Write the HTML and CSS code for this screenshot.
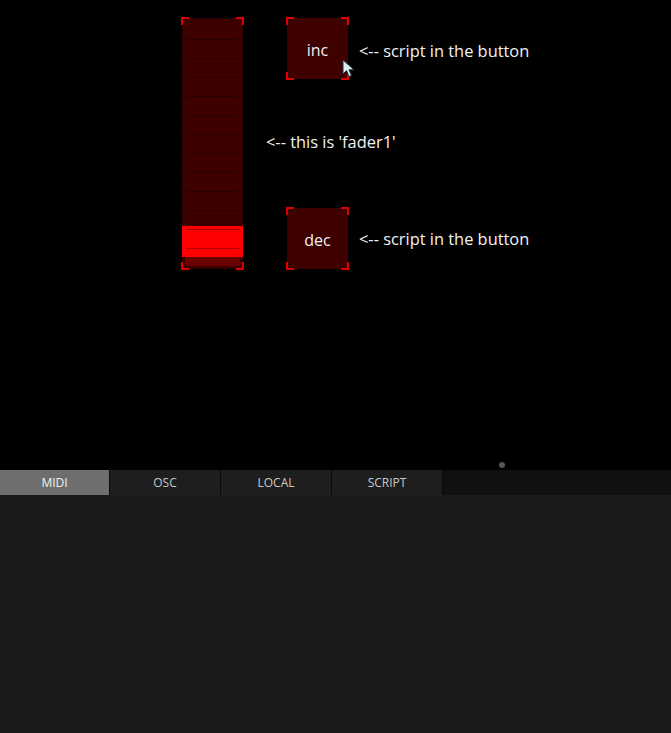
FILE: index.html
```html
<!DOCTYPE html>
<html>
<head>
<meta charset="utf-8">
<link rel="stylesheet" href="styles.css">
</head>
<body>
<div class="canvas">
  <div class="widget fader">
    <div class="track">
      <div class="lines">
        <i></i><i></i><i></i><i></i><i></i><i></i><i></i><i></i><i></i><i></i><i></i><i></i>
      </div>
      <div class="fill"></div>
      <div class="handle"></div>
    </div>
    <span class="c tl"></span><span class="c tr"></span><span class="c bl"></span><span class="c br"></span>
  </div>
  <div class="widget button inc">
    <span class="c tl"></span><span class="c tr"></span><span class="c bl"></span><span class="c br"></span>
    <span class="label">inc</span>
  </div>
  <div class="widget button dec">
    <span class="c tl"></span><span class="c tr"></span><span class="c bl"></span><span class="c br"></span>
    <span class="label">dec</span>
  </div>
  <div class="note n1">&lt;-- script in the button</div>
  <div class="note n2">&lt;-- this is 'fader1'</div>
  <div class="note n3">&lt;-- script in the button</div>
  <svg class="cursor" width="14" height="20" viewBox="0 0 14 20">
    <path d="M1 1 L1 15 L4.5 11.5 L7 17.5 L9.5 16.5 L7 10.8 L12 10.8 Z" fill="#d8eef4" stroke="#20303a" stroke-width="1"/>
  </svg>
  <span class="dot"></span>
</div>
<div class="tabbar">
  <div class="tab active">MIDI</div>
  <div class="tab">OSC</div>
  <div class="tab">LOCAL</div>
  <div class="tab">SCRIPT</div>
</div>
<div class="panel"></div>
</body>
</html>
```

FILE: styles.css
```css
html, body {
  margin: 0;
  padding: 0;
  background: #000;
  font-family: "Open Sans", "DejaVu Sans", sans-serif;
}
body {
  width: 671px;
  height: 733px;
  overflow: hidden;
  display: flex;
  flex-direction: column;
}
.canvas {
  position: relative;
  height: 470px;
  flex: none;
  background: #000;
}
.widget {
  position: absolute;
  box-sizing: border-box;
}
.c {
  position: absolute;
  width: 6px;
  height: 6px;
  border: 0 solid #e00000;
}
.c.tl { left: 0; top: 0; border-left-width: 2px; border-top-width: 2px; }
.c.tr { right: 0; top: 0; border-right-width: 2px; border-top-width: 2px; }
.c.bl { left: 0; bottom: 0; border-left-width: 2px; border-bottom-width: 2px; }
.c.br { right: 0; bottom: 0; border-right-width: 2px; border-bottom-width: 2px; }

.fader {
  left: 181px;
  top: 17px;
  width: 63px;
  height: 253px;
}
.fader .track {
  position: absolute;
  left: 1px;
  top: 1px;
  right: 1px;
  bottom: 1px;
  background: #3d0000;
  box-shadow: inset 0 0 0 1px #2e0000;
}
.fader .lines {
  position: absolute;
  left: 4px;
  right: 4px;
  top: 21px;
  display: flex;
  flex-direction: column;
  gap: 18px;
}
.fader .lines i {
  display: block;
  height: 1px;
  background: #280000;
}
.fader .fill {
  position: absolute;
  left: 0;
  right: 0;
  top: 208px;
  height: 31px;
  background: #ff0000;
}
.fader .fill::before, .fader .fill::after {
  content: "";
  position: absolute;
  left: 4px;
  right: 4px;
  height: 1px;
  background: #b00000;
}
.fader .fill::before { top: 3px; }
.fader .fill::after { top: 22px; }
.fader .handle {
  position: absolute;
  left: 3px;
  right: 3px;
  top: 239px;
  height: 9px;
  background: #6a0000;
  border-radius: 0 0 3px 3px;
}

.button {
  width: 63px;
  height: 63px;
  display: flex;
  align-items: center;
  justify-content: center;
}
.button::before {
  content: "";
  position: absolute;
  inset: 1px;
  background: #3f0000;
}
.button .label {
  position: relative;
  color: #f0f0f0;
  font-size: 16px;
  margin-top: 3px;
}
.inc { left: 286px; top: 17px; }
.dec { left: 286px; top: 207px; }

.note {
  position: absolute;
  color: #f2f2f2;
  font-size: 16.4px;
  line-height: 20px;
  white-space: nowrap;
}
.n1 { left: 359px; top: 41px; }
.n2 { left: 266px; top: 132px; }
.n3 { left: 359px; top: 229px; }

.cursor {
  position: absolute;
  left: 342px;
  top: 59px;
}
.dot {
  position: absolute;
  left: 499px;
  top: 462px;
  width: 6px;
  height: 6px;
  border-radius: 50%;
  background: #555;
}

.tabbar {
  height: 25px;
  flex: none;
  display: flex;
  background: #101010;
}
.tab {
  width: 111px;
  box-sizing: border-box;
  border-right: 1px solid #0a0a0a;
  background: #1e1e1e;
  color: #c8c8c8;
  font-size: 12px;
  display: flex;
  align-items: center;
  justify-content: center;
}
.tab.active {
  width: 110px;
  background: #6e6e6e;
  color: #f0f0f0;
}
.panel {
  flex: 1;
  background: #1b1b1b;
}
```
